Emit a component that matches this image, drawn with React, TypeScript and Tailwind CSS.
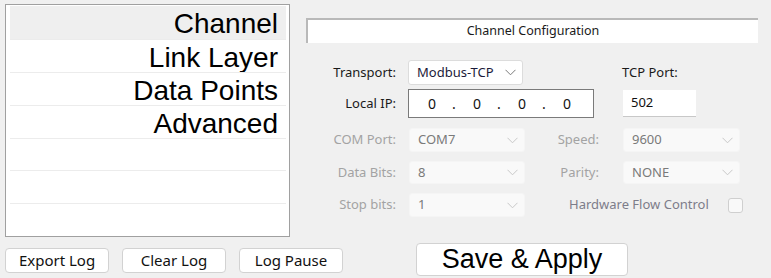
const items = ["Channel", "Link Layer", "Data Points", "Advanced", "", "", ""];

const ui = "font-['Noto_Sans',sans-serif]";
const arial = "font-['Liberation_Sans',Arial,sans-serif]";

function Chevron({ disabled }: { disabled: boolean }) {
  return (
    <svg width="11" height="7" viewBox="0 0 11 7" fill="none" className="shrink-0">
      <path
        d="M0.5 0.8 L5.5 5.8 L10.5 0.8"
        stroke={disabled ? "#c8c8c8" : "#7a7a7a"}
        strokeWidth="1"
      />
    </svg>
  );
}

function Select({ value, disabled = false, w }: { value: string; disabled?: boolean; w: string }) {
  return (
    <div
      className={`${w} flex h-full items-center justify-between rounded-[3px] pl-[8px] pr-[6px] text-[13px] ${
        disabled
          ? "border border-[#f5f5f5] bg-[#f9f9f9] text-[#7a7a7a]"
          : "border border-[#dcdcdc] bg-white text-[#1b1b3a]"
      }`}
    >
      <span>{value}</span>
      <Chevron disabled={disabled} />
    </div>
  );
}

function Label({ text, disabled = false, w }: { text: string; disabled?: boolean; w: string }) {
  return (
    <div className={`${w} shrink-0 text-right text-[13px] ${disabled ? "text-[#a3a3a3]" : "text-[#1a1a1a]"}`}>
      {text}
    </div>
  );
}

function SmallButton({ label }: { label: string }) {
  return (
    <button className="flex h-[25px] w-[104px] shrink-0 items-center justify-center rounded-[4px] border border-[#d2d2d2] bg-white text-[15px] text-[#111]">
      {label}
    </button>
  );
}

export default function App() {
  return (
    <div className={`${ui} flex h-[278px] w-[771px] overflow-hidden bg-[#f0f0f0]`}>
      {/* left side: page list + log buttons */}
      <div className="flex w-[290px] shrink-0 flex-col pl-[5px] pt-[4px]">
        <div className="flex h-[233px] w-[285px] flex-col border border-[#a0a0a0] bg-white pl-[4px] pr-[3px] pt-[1px]">
          {items.map((item, i) => (
            <div
              key={i}
              className={`flex h-[33.6px] items-center justify-end pr-[8px] pt-[4px] ${arial} text-[28px] leading-none text-black ${
                i === 0 ? "bg-[#efefef]" : "border-t border-[#ececec]"
              }`}
            >
              {item}
            </div>
          ))}
        </div>
        <div className="mt-[11px] flex gap-[13px]">
          <SmallButton label="Export Log" />
          <SmallButton label="Clear Log" />
          <SmallButton label="Log Pause" />
        </div>
      </div>

      {/* right side: channel configuration */}
      <div className="ml-[16px] flex shrink-0 flex-col pt-[18px]">
        <div className="flex h-[25px] w-[452px] items-center justify-center border-l-2 border-t-2 border-[#b9b9b9] bg-white text-[12.5px] text-[#1a1a1a]">
          Channel Configuration
        </div>

        <div className="mt-[17px] flex h-[25px] items-center">
          <Label text="Transport:" w="w-[90px]" />
          <div className="ml-[12px] h-full">
            <Select value="Modbus-TCP" w="w-[115px]" />
          </div>
          <div className="ml-[99px] text-[13px] text-[#1a1a1a]">TCP Port:</div>
        </div>

        <div className="mt-[4px] flex h-[29px] items-center">
          <Label text="Local IP:" w="w-[90px]" />
          <div className="ml-[12px] flex h-full w-[186px] items-center border border-[#7a7a7a] bg-white pl-[19px] text-[14px] text-[#111]">
            <span className="w-[24px]">0</span>
            <span className="w-[21px]">.</span>
            <span className="w-[24px]">0</span>
            <span className="w-[21px]">.</span>
            <span className="w-[24px]">0</span>
            <span className="w-[21px]">.</span>
            <span>0</span>
          </div>
          <div className="ml-[29px] flex h-[27px] w-[73px] items-center border-b border-[#c8c8c8] bg-white pl-[8px] text-[13px] text-[#111]">
            502
          </div>
        </div>

        <div className="mt-[10px] flex h-[24px] items-center">
          <Label text="COM Port:" disabled w="w-[90px]" />
          <div className="ml-[13px] h-full">
            <Select value="COM7" disabled w="w-[116px]" />
          </div>
          <Label text="Speed:" disabled w="w-[74px]" />
          <div className="ml-[24px] h-full">
            <Select value="9600" disabled w="w-[117px]" />
          </div>
        </div>

        <div className="mt-[9px] flex h-[23px] items-center">
          <Label text="Data Bits:" disabled w="w-[90px]" />
          <div className="ml-[13px] h-full">
            <Select value="8" disabled w="w-[116px]" />
          </div>
          <Label text="Parity:" disabled w="w-[74px]" />
          <div className="ml-[24px] h-full">
            <Select value="NONE" disabled w="w-[117px]" />
          </div>
        </div>

        <div className="mt-[9px] flex h-[24px] items-center">
          <Label text="Stop bits:" disabled w="w-[90px]" />
          <div className="ml-[13px] h-full">
            <Select value="1" disabled w="w-[116px]" />
          </div>
          <div className="ml-[44px] text-[13px] text-[#7d7d8a]">Hardware Flow Control</div>
          <div className="ml-[19px] h-[15px] w-[15px] rounded-[3px] border border-[#cfcfcf] bg-[#f9f9f9]" />
        </div>

        <div className="mt-[26px] flex">
          <button
            className={`ml-[110px] flex h-[33px] w-[212px] items-center justify-center rounded-[4px] border border-[#d2d2d2] bg-white ${arial} text-[27px] text-black`}
          >
            Save &amp; Apply
          </button>
        </div>
      </div>
    </div>
  );
}
